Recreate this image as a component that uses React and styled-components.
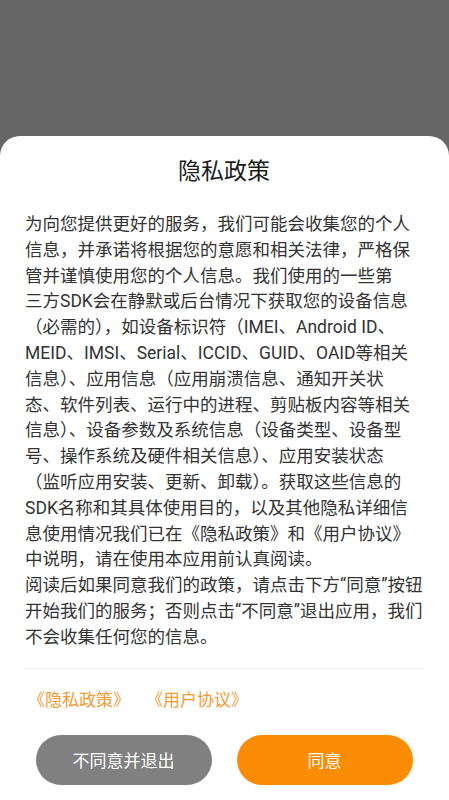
import React from "react";
import styled, { createGlobalStyle } from "styled-components";

const Global = createGlobalStyle`
  html, body { margin: 0; padding: 0; background: #666666; }
  body { font-family: Roboto, "Noto Sans CJK SC", sans-serif; }
  * { box-sizing: border-box; }
`;

const Screen = styled.div`
  width: 449px;
  height: 800px;
  display: flex;
  flex-direction: column;
  justify-content: flex-end;
  background: #666666;
`;

const Sheet = styled.div`
  height: 664px;
  background: #ffffff;
  border-radius: 20px 20px 0 0;
  padding: 21px 25px 0 24px;
  display: flex;
  flex-direction: column;
`;

const Title = styled.h1`
  margin: 0;
  font-size: 23px;
  line-height: 30px;
  font-weight: 400;
  color: #1c1c1c;
  text-align: center;
`;

const Body = styled.div`
  margin-top: 25px;
  padding-left: 1px;
  font-size: 17.5px;
  line-height: 25.8px;
  color: #333333;
`;

const Line = styled.span`
  display: block;
  white-space: nowrap;
`;

const Divider = styled.div`
  margin-top: 17px;
  height: 1px;
  background: #efefef;
`;

const Links = styled.div`
  margin-top: 19px;
  display: flex;
  gap: 16px;
  padding-left: 4px;
`;

const LinkText = styled.a`
  font-size: 17px;
  line-height: 24px;
  color: #f29a30;
  text-decoration: none;
`;

const Buttons = styled.div`
  margin-top: 23px;
  display: flex;
  justify-content: center;
  gap: 25px;
`;

const Button = styled.button`
  width: 176px;
  height: 50px;
  border: none;
  border-radius: 25px;
  background: ${(p) => (p.$primary ? "#fb8c05" : "#808080")};
  color: #ffffff;
  font-family: Roboto, "Noto Sans CJK SC", sans-serif;
  font-size: 17px;
  padding: 0;
`;

const lines = [
  "为向您提供更好的服务，我们可能会收集您的个人",
  "信息，并承诺将根据您的意愿和相关法律，严格保",
  "管并谨慎使用您的个人信息。我们使用的一些第",
  "三方SDK会在静默或后台情况下获取您的设备信息",
  "（必需的），如设备标识符（IMEI、Android ID、",
  "MEID、IMSI、Serial、ICCID、GUID、OAID等相关",
  "信息）、应用信息（应用崩溃信息、通知开关状",
  "态、软件列表、运行中的进程、剪贴板内容等相关",
  "信息）、设备参数及系统信息（设备类型、设备型",
  "号、操作系统及硬件相关信息）、应用安装状态",
  "（监听应用安装、更新、卸载）。获取这些信息的",
  "SDK名称和其具体使用目的，以及其他隐私详细信",
  "息使用情况我们已在《隐私政策》和《用户协议》",
  "中说明，请在使用本应用前认真阅读。",
  "阅读后如果同意我们的政策，请点击下方“同意”按钮",
  "开始我们的服务；否则点击“不同意”退出应用，我们",
  "不会收集任何您的信息。",
];

export default function App() {
  return (
    <>
      <Global />
      <Screen>
        <Sheet>
          <Title>隐私政策</Title>
          <Body>
            {lines.map((l, i) => (
              <Line key={i}>{l}</Line>
            ))}
          </Body>
          <Divider />
          <Links>
            <LinkText>《隐私政策》</LinkText>
            <LinkText>《用户协议》</LinkText>
          </Links>
          <Buttons>
            <Button>不同意并退出</Button>
            <Button $primary>同意</Button>
          </Buttons>
        </Sheet>
      </Screen>
    </>
  );
}
